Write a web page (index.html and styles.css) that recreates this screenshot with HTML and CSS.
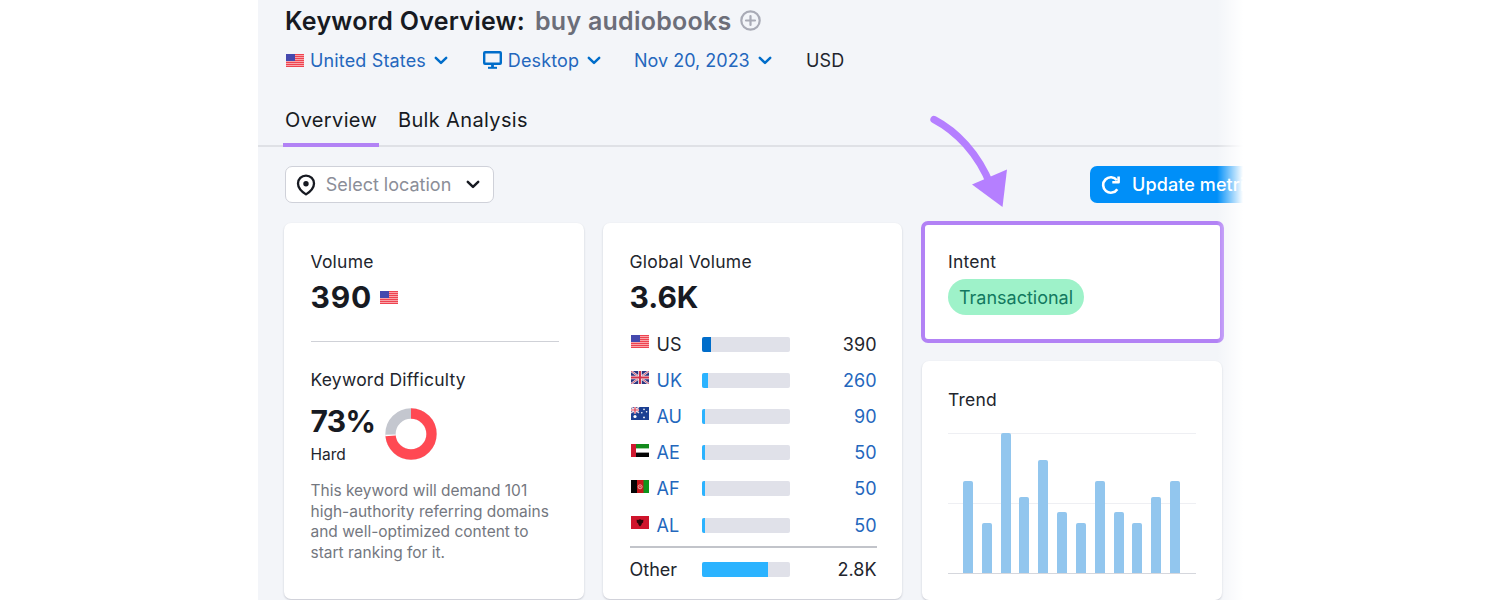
FILE: index.html
```html
<!DOCTYPE html>
<html lang="en">
<head>
    <meta charset="UTF-8">
    <meta name="viewport" content="width=device-width, initial-scale=1.0">
    <title>Keyword Overview</title>
    <link rel="stylesheet" href="styles.css">
</head>
<body>
    <!-- shared icons -->
    <svg class="sprite" width="0" height="0">
        <symbol id="flag-us" viewBox="0 0 18 13">
            <rect width="18" height="13" fill="#f9a3a8"/>
            <path d="M0 .5h18M0 2.5h18M0 4.5h18M0 6.5h18M0 8.5h18M0 10.5h18M0 12.5h18" stroke="#ee4350"/>
            <rect width="9" height="7" fill="#4549ae"/>
        </symbol>
        <symbol id="flag-uk" viewBox="0 0 18 13">
            <rect width="18" height="13" fill="#2c3580"/>
            <path d="M0 0l18 13M18 0L0 13" stroke="#e8e3ee" stroke-width="2.2"/>
            <path d="M0 0l18 13M18 0L0 13" stroke="#cf3a50" stroke-width=".8"/>
            <path d="M9 0v13M0 6.5h18" stroke="#f4eef2" stroke-width="3.6"/>
            <path d="M9 0v13M0 6.5h18" stroke="#d2324a" stroke-width="2"/>
        </symbol>
        <symbol id="flag-au" viewBox="0 0 18 13">
            <rect width="18" height="13" fill="#1b3f92"/>
            <path d="M0 0l8 6M8 0L0 6" stroke="#f0d5de" stroke-width="1.4"/>
            <path d="M4 0v6.5M0 3h8" stroke="#fff" stroke-width="2.4"/>
            <path d="M4 0v6.5M0 3h8" stroke="#d93a50" stroke-width="1.2"/>
            <circle cx="4" cy="9.5" r="1.6" fill="#fff"/>
            <circle cx="13" cy="2.4" r=".8" fill="#fff"/>
            <circle cx="10.8" cy="5.8" r=".8" fill="#fff"/>
            <circle cx="15.6" cy="4.8" r=".8" fill="#fff"/>
            <circle cx="13" cy="10.4" r=".9" fill="#fff"/>
        </symbol>
        <symbol id="flag-ae" viewBox="0 0 18 13">
            <rect width="18" height="13" fill="#fff"/>
            <rect width="18" height="4.4" fill="#128a1c"/>
            <rect y="8.6" width="18" height="4.4" fill="#050505"/>
            <rect width="5" height="13" fill="#cf1a30"/>
        </symbol>
        <symbol id="flag-af" viewBox="0 0 18 13">
            <rect width="18" height="13" fill="#c5171c"/>
            <rect width="6" height="13" fill="#050505"/>
            <rect x="12.5" width="5.5" height="13" fill="#0d951b"/>
            <circle cx="9.1" cy="6.8" r="2" fill="none" stroke="#f0a4a2" stroke-width="1"/>
            <circle cx="9.1" cy="6.8" r=".8" fill="#f0a4a2"/>
        </symbol>
        <symbol id="flag-al" viewBox="0 0 18 13">
            <rect width="18" height="13" fill="#cf142b"/>
            <path d="M5.6 3.8l1.8.3 1-1 .6.8.6-.8 1 1 1.8-.3-.3 2.6-1.3 1.2-.4 1.4-1.4 1.4-1.4-1.4-.4-1.4-1.3-1.2z" fill="#2c0509"/>
        </symbol>
        <symbol id="chevron" viewBox="0 0 14 9">
            <path d="M1.8 1.8L7 6.9l5.2-5.1" fill="none" stroke="currentColor" stroke-width="2.5" stroke-linecap="round" stroke-linejoin="round"/>
        </symbol>
    </svg>

    <div class="page">
        <header>
            <h1 class="title">
                <span class="title-label">Keyword Overview:</span>
                <span class="title-keyword">buy audiobooks</span>
                <svg class="plus" width="21" height="21" viewBox="0 0 21 21" fill="none" stroke="#a9abb6" stroke-width="2.2">
                    <circle cx="10.5" cy="10.5" r="9.2"/>
                    <path d="M10.5 6v9M6 10.5h9" stroke-linecap="round"/>
                </svg>
            </h1>

            <div class="filters">
                <a class="filter country">
                    <svg class="flag"><use href="#flag-us"/></svg>
                    <span>United States</span>
                    <svg class="chevron"><use href="#chevron"/></svg>
                </a>
                <a class="filter device">
                    <svg width="19" height="19" viewBox="0 0 19 19" fill="none" stroke="#006dca" stroke-width="2.4">
                        <rect x="1.2" y="1.2" width="16.6" height="11.6" rx=".8"/>
                        <path d="M9.5 13v4" stroke-width="2.8"/>
                        <path d="M5 16.8h9" stroke-width="2"/>
                    </svg>
                    <span>Desktop</span>
                    <svg class="chevron"><use href="#chevron"/></svg>
                </a>
                <a class="filter date">
                    <span>Nov 20, 2023</span>
                    <svg class="chevron"><use href="#chevron"/></svg>
                </a>
                <span class="currency">USD</span>
            </div>

            <nav class="tabs">
                <a class="tab active">Overview</a>
                <a class="tab">Bulk Analysis</a>
            </nav>
        </header>

        <div class="toolbar">
            <button type="button" class="location">
                <svg width="20" height="22" viewBox="0 0 20 22">
                    <path d="M10 1.6c4.6 0 8 3.4 8 7.8 0 4.3-3.5 8-8 11-4.5-3-8-6.7-8-11 0-4.4 3.4-7.8 8-7.8z" fill="none" stroke="#171a22" stroke-width="2.3" stroke-linejoin="round"/>
                    <circle cx="10" cy="9.7" r="2.7" fill="#171a22"/>
                </svg>
                <span>Select location</span>
                <svg class="chevron"><use href="#chevron"/></svg>
            </button>
            <button type="button" class="update">
                <svg width="20" height="20" viewBox="0 0 20 20" fill="none" stroke="#fff" stroke-width="2.6">
                    <path d="M16.3 14.2A7.7 7.7 0 1 1 15.9 5.2"/>
                    <path d="M17.6 1.5V7.3H11.3" stroke-linejoin="round"/>
                </svg>
                <span>Update metrics</span>
            </button>
        </div>

        <main class="cards">
            <section class="card volume-card">
                <h2>Volume</h2>
                <div class="big volume">390 <svg class="flag"><use href="#flag-us"/></svg></div>
                <hr>
                <h2>Keyword Difficulty</h2>
                <div class="difficulty">
                    <div>
                        <div class="big percent">73%</div>
                        <div class="level">Hard</div>
                    </div>
                    <svg class="donut" width="52" height="52" viewBox="0 0 52 52" fill="none" stroke-width="10.3">
                        <circle cx="26" cy="26" r="20.5" stroke="#c4c7cf"/>
                        <circle cx="26" cy="26" r="20.5" stroke="#fff" pathLength="100" stroke-dasharray="74.5 25.5" transform="rotate(-90 26 26)"/>
                        <circle cx="26" cy="26" r="20.5" stroke="#ff4953" pathLength="100" stroke-dasharray="73.5 26.5" transform="rotate(-90 26 26)"/>
                    </svg>
                </div>
                <p class="hint">This keyword will demand 101<br>high-authority referring domains<br>and well-optimized content to<br>start ranking for it.</p>
            </section>

            <section class="card global-card">
                <h2>Global Volume</h2>
                <div class="big global">3.6K</div>
                <div class="countries">
                    <div class="row current">
                        <svg class="flag"><use href="#flag-us"/></svg><span class="code">US</span>
                        <div class="bar"><div class="fill" style="width: 11%"></div></div>
                        <span class="value">390</span>
                    </div>
                    <div class="row">
                        <svg class="flag"><use href="#flag-uk"/></svg><span class="code">UK</span>
                        <div class="bar"><div class="fill" style="width: 7.2%"></div></div>
                        <span class="value">260</span>
                    </div>
                    <div class="row">
                        <svg class="flag"><use href="#flag-au"/></svg><span class="code">AU</span>
                        <div class="bar"><div class="fill" style="width: 4.5%"></div></div>
                        <span class="value">90</span>
                    </div>
                    <div class="row">
                        <svg class="flag"><use href="#flag-ae"/></svg><span class="code">AE</span>
                        <div class="bar"><div class="fill" style="width: 4.5%"></div></div>
                        <span class="value">50</span>
                    </div>
                    <div class="row">
                        <svg class="flag"><use href="#flag-af"/></svg><span class="code">AF</span>
                        <div class="bar"><div class="fill" style="width: 4.5%"></div></div>
                        <span class="value">50</span>
                    </div>
                    <div class="row">
                        <svg class="flag"><use href="#flag-al"/></svg><span class="code">AL</span>
                        <div class="bar"><div class="fill" style="width: 4.5%"></div></div>
                        <span class="value">50</span>
                    </div>
                </div>
                <div class="row other">
                    <span class="other-label">Other</span>
                    <div class="bar"><div class="fill" style="width: 76%"></div></div>
                    <span class="value">2.8K</span>
                </div>
            </section>

            <div class="column">
                <section class="card intent-card">
                    <h2>Intent</h2>
                    <span class="tag">Transactional</span>
                </section>
                <section class="card trend-card">
                    <h2>Trend</h2>
                    <div class="chart">
                        <div class="col" style="height: 92px"></div>
                        <div class="col" style="height: 50px"></div>
                        <div class="col" style="height: 140px"></div>
                        <div class="col" style="height: 76px"></div>
                        <div class="col" style="height: 113px"></div>
                        <div class="col" style="height: 61px"></div>
                        <div class="col" style="height: 50px"></div>
                        <div class="col" style="height: 92px"></div>
                        <div class="col" style="height: 61px"></div>
                        <div class="col" style="height: 50px"></div>
                        <div class="col" style="height: 76px"></div>
                        <div class="col" style="height: 92px"></div>
                    </div>
                </section>
            </div>
        </main>

        <div class="fade"></div>
        <svg class="arrow" width="80" height="100" viewBox="0 0 80 100">
            <path d="M9 9.5C31 21 53 43 66 76" fill="none" stroke="#b57fff" stroke-width="7.3" stroke-linecap="round"/>
            <path d="M47 74.5L82 59.5 77.5 97z" fill="#b57fff"/>
        </svg>
    </div>
</body>
</html>
```
FILE: styles.css
```css
* {
    box-sizing: border-box;
}

body {
    margin: 0;
    height: 600px;
    overflow: hidden;
    background: #ffffff;
    font-family: Inter, "Liberation Sans", sans-serif;
    font-size: 18px;
    font-weight: 375;
    color: #22252d;
}

.sprite {
    position: absolute;
}

.page {
    position: relative;
    width: 985px;
    height: 600px;
    margin-left: 258px;
    overflow: hidden;
    background: #f3f5f9;
}

.flag {
    width: 18px;
    height: 13px;
    flex: none;
}

.chevron {
    width: 14px;
    height: 9px;
    flex: none;
}

/* header */
.title {
    display: flex;
    align-items: center;
    height: 41px;
    margin: 0 0 -1px;
    padding-left: 27px;
    font-size: 25px;
    font-weight: 600;
    letter-spacing: 0.25px;
    color: #171a22;
    white-space: nowrap;
}

.title-label {
    width: 250px;
}

.title-keyword {
    width: 205px;
    color: #6c6e79;
}

.plus {
    margin-top: -1px;
}

.filters {
    display: flex;
    align-items: center;
    height: 40px;
    padding-left: 28px;
    letter-spacing: 0.15px;
    white-space: nowrap;
}

.filter {
    display: flex;
    align-items: center;
    justify-content: space-between;
    color: #2467bd;
}

.filter .chevron {
    color: #006dca;
}

.filter svg:first-child {
    margin-right: -2px;
}

.country {
    width: 162px;
    margin-right: 35px;
}

.device {
    width: 118px;
    margin-right: 33px;
}

.date {
    width: 138px;
    margin-right: 34px;
    letter-spacing: 0;
}

.tabs {
    display: flex;
    height: 67px;
    padding-left: 25px;
    border-bottom: 2px solid #dfe1e6;
    font-size: 20px;
    font-weight: 400;
    letter-spacing: 0.35px;
    color: #171a22;
}

.tab {
    display: flex;
    align-items: center;
    height: 67px;
    padding: 12px 0 0 2px;
    margin-right: 17px;
    white-space: nowrap;
}

.active {
    width: 96px;
    border-bottom: 4px solid #b282f5;
    padding-top: 16px;
}

/* toolbar */
.toolbar {
    display: flex;
    justify-content: space-between;
    height: 76px;
    padding: 19px 0 0 27px;
}

button {
    display: flex;
    align-items: center;
    height: 37px;
    font-family: inherit;
    font-size: 18px;
    border: none;
    border-radius: 7px;
    white-space: nowrap;
}

.location {
    width: 209px;
    padding: 0 13px 0 10px;
    justify-content: space-between;
    border: 1px solid #cfd1d9;
    background: #ffffff;
    color: #8b8e98;
    font-weight: 375;
}

.location span {
    margin-left: -5px;
}

.location .chevron {
    color: #171a22;
}

.update {
    width: 190px;
    margin-right: -37px;
    padding: 0 11px;
    gap: 11px;
    background: #008ff8;
    color: #ffffff;
    font-weight: 500;
    letter-spacing: 0.1px;
}

/* cards */
.cards {
    display: flex;
    gap: 20px;
    padding-left: 26px;
}

.card {
    width: 299px;
    height: 376px;
    padding: 26px 26px 0;
    border-radius: 7px;
    background: #ffffff;
    box-shadow: 0 1px 2px rgba(30, 35, 60, 0.22);
}

.volume-card {
    width: 300px;
    margin-right: -1px;
}

.volume-card,
.global-card {
    padding-left: 26.5px;
    padding-right: 25.5px;
}

h2 {
    margin: 0;
    font-size: 17.5px;
    font-weight: 375;
    letter-spacing: 0.22px;
    line-height: 26px;
}

.big {
    font-size: 30px;
    font-weight: 700;
    line-height: 36px;
    color: #171a22;
}

.volume {
    display: flex;
    align-items: center;
    gap: 8px;
    margin-top: 4px;
    letter-spacing: 0.8px;
}

hr {
    height: 1px;
    margin: 26px 0 25px;
    border: none;
    background: #cfd1d7;
}

.difficulty {
    display: flex;
    height: 75px;
    margin-top: 10px;
}

.percent {
    width: 74px;
    letter-spacing: -0.7px;
}

.level {
    margin-top: 6px;
    font-size: 15.5px;
    line-height: 20px;
}

.donut {
    margin-top: 5px;
}

.hint {
    margin: 3px 0 0;
    font-size: 15.5px;
    line-height: 20.5px;
    color: #747780;
    white-space: nowrap;
}

.global {
    margin-top: 4px;
}

.countries {
    margin-top: 11px;
    height: 222px;
    border-bottom: 2px solid #c2c4ca;
}

.row {
    display: flex;
    align-items: center;
    height: 36.2px;
    color: #2467bd;
}

.row .flag {
    margin: 0 8px 5px 1px;
}

.code {
    width: 45px;
}

.bar {
    width: 88px;
    height: 15px;
    border-radius: 2px;
    overflow: hidden;
    background: #e0e1e9;
}

.fill {
    height: 100%;
    background: #2bb3ff;
}

.current .fill {
    background: #006dca;
}

.value {
    margin-left: auto;
}

.current,
.other {
    color: #22252d;
}

.other {
    margin-top: 3px;
}

.other-label {
    width: 72px;
}

.column .card {
    width: 300px;
}

.column .intent-card {
    width: 303px;
    height: 122px;
    margin: -2px 0 18px -1px;
    padding: 24px 23px 0;
    border: 4px solid #b282f5;
    box-shadow: none;
}

.tag {
    display: inline-flex;
    align-items: center;
    justify-content: center;
    width: 136px;
    height: 36px;
    margin-top: 4px;
    border-radius: 18px;
    background: #9ef2c9;
    color: #12795f;
}

.trend-card {
    height: 239px;
}

.chart {
    display: flex;
    align-items: flex-end;
    justify-content: space-between;
    width: 248px;
    height: 141px;
    margin-top: 20px;
    padding: 0 16px 0 15px;
    border-bottom: 1px solid #d5d7dd;
    background: linear-gradient(#eeeff3, #eeeff3) 0 0 / 100% 1px no-repeat,
                linear-gradient(#eeeff3, #eeeff3) 0 70px / 100% 1px no-repeat;
}

.col {
    width: 10px;
    border-radius: 2px 2px 0 0;
    background: #92c6ee;
}

/* page edge fades to white */
.fade {
    position: absolute;
    top: 0;
    right: 0;
    width: 26px;
    height: 600px;
    background: linear-gradient(to right, rgba(255, 255, 255, 0), #ffffff);
}

.arrow {
    position: absolute;
    left: 667px;
    top: 110px;
    overflow: visible;
}
```
